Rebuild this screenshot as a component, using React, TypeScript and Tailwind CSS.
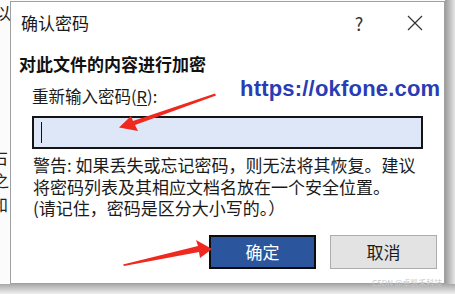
import React from "react";

const font = { fontFamily: '"Noto Sans CJK SC", "Noto Sans", sans-serif' };

export default function App() {
  return (
    <div className="relative w-[455px] h-[294px] overflow-hidden bg-[#fbfbfb]" style={font}>
      {/* background document fragments */}
      <div className="absolute left-[-6px] top-[4px] text-[17px] leading-none text-[#222]">以</div>
      <div className="absolute left-[-9px] top-[148px] text-[17px] leading-none text-[#222]">右</div>
      <div className="absolute left-[-7px] top-[172px] text-[16px] leading-none text-[#222]">之</div>
      <div className="absolute left-[-8px] top-[196px] text-[16px] leading-none text-[#222]">和</div>
      <div className="absolute left-[445px] top-0 w-[10px] h-[294px] bg-gradient-to-r from-[#9c9c9c] to-[#e6e6e6]" />
      <div className="absolute left-0 top-[284px] w-[455px] h-[10px] bg-gradient-to-b from-[#a8a8a8] to-[#f0f0f0]" />

      <div className="pl-[10px] pt-[1px] relative">
        <div className="w-[435px] h-[283px] bg-white border border-[#a0a0a0] flex flex-col">
          {/* title bar */}
          <div className="h-[42px] flex items-center pl-[10px] text-[#1a1a1a]">
            <span className="text-[17px]">确认密码</span>
            <span className="ml-auto w-[32px] text-center text-[18px] text-[#333]">?</span>
            <span className="ml-[29px] mr-[18px] w-[22px] flex items-center justify-center">
              <svg width="16" height="16" viewBox="0 0 16 16">
                <path d="M1 1 L15 15 M15 1 L1 15" stroke="#333" strokeWidth="1.2" fill="none" />
              </svg>
            </span>
          </div>
          <div className="pl-[8px] mt-[10px] text-[17px] font-bold leading-[20px] text-[#111]">对此文件的内容进行加密</div>
          <div className="pl-[21px] mt-[12px] text-[16.5px] leading-[20px] text-[#1a1a1a]">
            重新输入密码(<span className="underline underline-offset-2">R</span>):
          </div>
          <div className="ml-[21px] mt-[10px] w-[391px] h-[33px] border-2 border-[#141414] bg-[#dde7f7] flex items-center pl-[7px]">
            <div className="w-px h-[21px] bg-[#111]" />
          </div>
          <div className="pl-[22px] mt-[5px] text-[17px] leading-[21.5px] text-[#1a1a1a] w-[430px] whitespace-nowrap">
            <div>警告: 如果丢失或忘记密码，则无法将其恢复。建议</div>
            <div>将密码列表及其相应文档名放在一个安全位置。</div>
            <div>(请记住，密码是区分大小写的。）</div>
          </div>
          <div className="flex mt-[16px] pl-[198px] gap-[14px]">
            <div className="w-[107px] h-[34px] bg-[#2b569d] border-2 border-[#0c0c0c] text-white text-[17px] flex items-center justify-center">确定</div>
            <div className="w-[107px] h-[34px] bg-[#e3e3e3] border border-[#acacac] text-[#1a1a1a] text-[17px] flex items-center justify-center">取消</div>
          </div>
        </div>
      </div>

      {/* overlay URL */}
      <div
        className="absolute left-[240px] top-[78px] text-[22px] font-bold leading-none text-[#2a3cb4] tracking-[0.2px]"
        style={{ fontFamily: '"Liberation Sans", Arial, sans-serif' }}
      >
        https://okfone.com
      </div>

      {/* red arrows */}
      <svg className="absolute left-0 top-0" width="455" height="294" viewBox="0 0 455 294">
        <polygon points="215,93.5 216,95.5 135,125 138,131 119,127.5 131,116 133,121" fill="#f0281e" />
        <polygon points="123,264.5 198,246 196,240 212,249 200,258 199,252 124,266" fill="#f0281e" />
      </svg>

      {/* watermark */}
      <div className="absolute left-[372px] top-[279px] text-[8px] leading-none text-[#c8c8c8]">CSDN @卓凯禾科技</div>
    </div>
  );
}
